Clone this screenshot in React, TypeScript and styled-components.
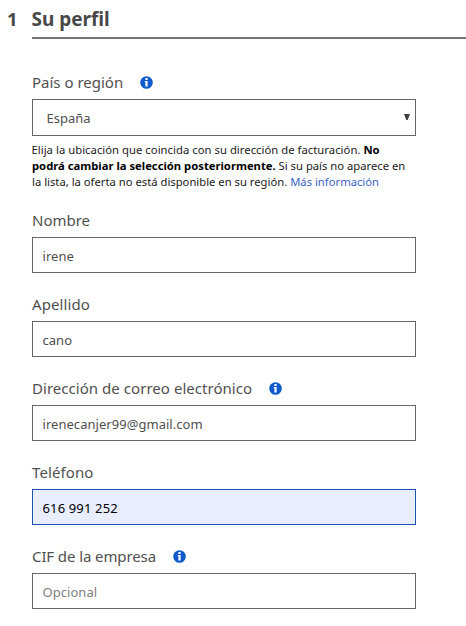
import React from "react";
import styled, { createGlobalStyle } from "styled-components";

const GlobalStyle = createGlobalStyle`
  * { box-sizing: border-box; }
  body {
    margin: 0;
    background: #fff;
    overflow: hidden;
    font-family: "Noto Sans", sans-serif;
  }
`;

const Page = styled.main`
  width: 466px;
  height: 626px;
  overflow: hidden;
  padding-left: 32px;
`;

const Header = styled.header`
  display: flex;
  height: 39px;
  margin-left: -25px;
`;

const Step = styled.span`
  width: 25px;
  font-size: 18.5px;
  font-weight: 700;
  line-height: 38px;
  color: #484848;
`;

const Title = styled.h1`
  flex: 1;
  margin: 0;
  border-bottom: 2px solid #757575;
  font-size: 19px;
  font-weight: 700;
  line-height: 38px;
  color: #484848;
  text-indent: -0.5px;
`;

const Form = styled.form`
  display: flex;
  flex-direction: column;
  width: 384px;
  padding-top: 32px;
`;

const Field = styled.div`
  height: 84px;
`;

const RegionField = styled.div`
  height: 138px;
`;

const LabelRow = styled.div`
  display: flex;
  align-items: center;
  gap: 17px;
  height: 28px;
  padding-bottom: 4px;
`;

const Label = styled.label<{ $spacing?: number }>`
  margin-top: -2px;
  font-size: 15px;
  line-height: 24px;
  letter-spacing: ${(p) => p.$spacing ?? 0}px;
  color: #505050;
  white-space: nowrap;
`;

const Input = styled.input<{ $filled?: boolean }>`
  display: block;
  width: 384px;
  height: 36px;
  padding: 2px 10px 0 9.5px;
  border: 1px solid ${(p) => (p.$filled ? "#1b52b5" : "#666")};
  border-radius: 0;
  outline: none;
  background: ${(p) => (p.$filled ? "#e8eefe" : "#fff")};
  color: ${(p) => (p.$filled ? "#000" : "#505050")};
  font: 13px "Noto Sans", sans-serif;
  letter-spacing: ${(p) => (p.$filled ? 0.15 : 0.04)}px;
  &::placeholder { color: #808080; opacity: 1; }
`;

const Select = styled.div`
  display: flex;
  align-items: center;
  justify-content: space-between;
  height: 37px;
  padding: 1px 5px 0 13.5px;
  border: 1px solid #666;
  font-size: 13px;
  color: #505050;
`;

const Help = styled.p`
  margin: 6px 0 0;
  font-size: 11.25px;
  line-height: 16px;
  color: #1a1a1a;
  white-space: nowrap;
  text-indent: -0.5px;
  b { color: #000; }
`;

const FirstLine = styled.span`
  letter-spacing: 0.04px;
`;

const Link = styled.a`
  color: #3a5fc8;
`;

const Info = styled.svg`
  flex: none;
  margin-top: -1px;
`;

const InfoIcon = () => (
  <Info width="13" height="13" viewBox="0 0 13 13" aria-hidden="true">
    <circle cx="6.5" cy="6.5" r="6.3" fill="#0f5bce" />
    <path d="M5.4 2h2.2v2H5.4zM4.7 5h2.9v5.6H5.4V6h-.7z" fill="#fff" />
  </Info>
);

const Arrow = styled.svg`
  position: relative;
  top: -1px;
`;

const fields = [
  { label: "Nombre", value: "irene" },
  { label: "Apellido", value: "cano", spacing: 0.1 },
  { label: "Dirección de correo electrónico", value: "irenecanjer99@gmail.com", info: true, spacing: 0.04 },
  { label: "Teléfono", value: "616 991 252", filled: true, spacing: 0.1 },
  { label: "CIF de la empresa", placeholder: "Opcional", info: true, spacing: -0.1 },
];

export default function App() {
  return (
    <Page>
      <GlobalStyle />
      <Header>
        <Step>1</Step>
        <Title>Su perfil</Title>
      </Header>
      <Form>
        <RegionField>
          <LabelRow>
            <Label>País o región</Label>
            <InfoIcon />
          </LabelRow>
          <Select>
            España
            <Arrow width="6" height="6" viewBox="0 0 6 6" aria-hidden="true">
              <path d="M0 0h6L3.7 6H2.3z" fill="#404040" />
            </Arrow>
          </Select>
          <Help>
            <FirstLine>
              Elija la ubicación que coincida con su dirección de facturación. <b>No</b>
            </FirstLine>
            <br />
            <b>podrá cambiar la selección posteriormente.</b> Si su país no aparece en
            <br />
            la lista, la oferta no está disponible en su región. <Link>Más información</Link>
          </Help>
        </RegionField>
        {fields.map((f) => (
          <Field key={f.label}>
            <LabelRow>
              <Label $spacing={f.spacing}>{f.label}</Label>
              {f.info && <InfoIcon />}
            </LabelRow>
            <Input $filled={f.filled} defaultValue={f.value} placeholder={f.placeholder} />
          </Field>
        ))}
      </Form>
    </Page>
  );
}
